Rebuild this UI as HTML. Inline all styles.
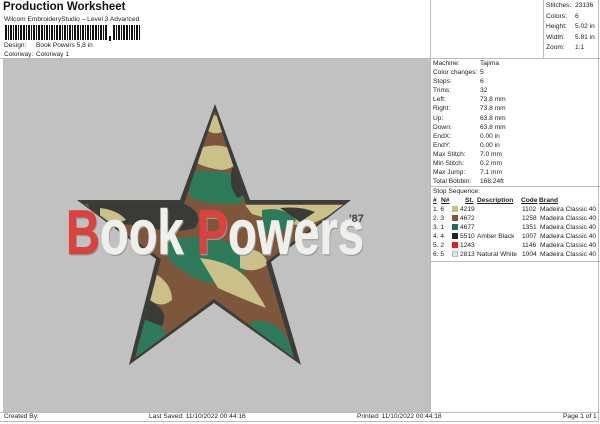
<!DOCTYPE html>
<html><head><meta charset="utf-8"><style>
*{margin:0;padding:0;box-sizing:border-box}
body{width:600px;height:424px;background:#fff;font-family:"Liberation Sans",Arial,sans-serif;color:#222;position:relative;overflow:hidden;font-size:6.6px}
.a{position:absolute;white-space:nowrap}
.t{font-size:6.6px;line-height:9px}
</style></head><body>
<div class="a" style="left:3px;top:1px;font-size:11.5px;font-weight:bold;color:#111">Production Worksheet</div>
<div class="a t" style="left:4px;top:15px">Wilcom EmbroideryStudio – Level 3 Advanced</div>
<svg class="a" style="left:5px;top:25px" width="140" height="16">
<g fill="#111">
<rect x="0" y="0" width="2" height="15"/><rect x="3" y="0" width="1" height="15"/><rect x="5" y="0" width="2" height="15"/><rect x="8" y="0" width="1" height="15"/><rect x="10" y="0" width="2" height="15"/><rect x="13" y="0" width="1" height="15"/><rect x="15" y="0" width="2" height="15"/><rect x="18" y="0" width="2" height="15"/><rect x="21" y="0" width="1" height="15"/><rect x="23" y="0" width="2" height="15"/><rect x="26" y="0" width="1" height="15"/><rect x="28" y="0" width="2" height="15"/><rect x="31" y="0" width="1" height="15"/><rect x="33" y="0" width="2" height="15"/><rect x="36" y="0" width="2" height="15"/><rect x="39" y="0" width="1" height="15"/><rect x="41" y="0" width="2" height="15"/><rect x="44" y="0" width="1" height="15"/><rect x="46" y="0" width="2" height="15"/><rect x="49" y="0" width="1" height="15"/><rect x="51" y="0" width="2" height="15"/><rect x="54" y="0" width="2" height="15"/><rect x="57" y="0" width="1" height="15"/><rect x="59" y="0" width="2" height="15"/><rect x="62" y="0" width="1" height="15"/><rect x="64" y="0" width="2" height="15"/><rect x="67" y="0" width="1" height="15"/><rect x="69" y="0" width="2" height="15"/><rect x="72" y="0" width="2" height="15"/><rect x="75" y="0" width="1" height="15"/><rect x="77" y="0" width="2" height="15"/><rect x="80" y="0" width="1" height="15"/><rect x="82" y="0" width="2" height="15"/><rect x="85" y="0" width="1" height="15"/><rect x="87" y="0" width="2" height="15"/><rect x="90" y="0" width="2" height="15"/><rect x="93" y="0" width="1" height="15"/><rect x="95" y="0" width="2" height="15"/><rect x="98" y="0" width="1" height="15"/><rect x="100" y="0" width="2" height="15"/>
<rect x="104" y="11" width="2" height="5"/>
<rect x="108" y="0" width="2" height="15"/><rect x="111" y="0" width="1" height="15"/><rect x="113" y="0" width="2" height="15"/><rect x="116" y="0" width="1" height="15"/><rect x="118" y="0" width="2" height="15"/><rect x="121" y="0" width="2" height="15"/><rect x="124" y="0" width="1" height="15"/><rect x="126" y="0" width="2" height="15"/><rect x="129" y="0" width="1" height="15"/><rect x="131" y="0" width="2" height="15"/><rect x="134" y="0" width="1" height="15"/>
</g></svg>
<div class="a t" style="left:4px;top:41px">Design:</div><div class="a t" style="left:36px;top:41px">Book Powers 5,8 in</div>
<div class="a t" style="left:4px;top:50px">Colorway:</div><div class="a t" style="left:36px;top:50px">Colorway 1</div>
<div class="a" style="left:0;top:58px;width:430px;height:1px;background:#bbb"></div>
<div class="a" style="left:543px;top:0;width:1px;height:58px;background:#bbb"></div>
<div class="a" style="left:430px;top:0;width:1px;height:412px;background:#bbb"></div>
<div class="a" style="left:430px;top:58px;width:170px;height:1px;background:#bbb"></div>
<div class="a" style="left:598px;top:0;width:1px;height:422px;background:#bbb"></div>
<div class="a t" style="left:546px;top:1px;line-height:10.5px">Stitches:<br>Colors:<br>Height:<br>Width:<br>Zoom:</div>
<div class="a t" style="left:575px;top:1px;line-height:10.5px">23136<br>6<br>5.02 in<br>5.81 in<br>1:1</div>
<div class="a t" style="left:433px;top:59px;line-height:9.1px">Machine:<br>Color changes:<br>Stops:<br>Trims:<br>Left:<br>Right:<br>Up:<br>Down:<br>EndX:<br>EndY:<br>Max Stitch:<br>Min Stitch:<br>Max Jump:<br>Total Bobbin:</div>
<div class="a t" style="left:480px;top:59px;line-height:9.1px">Tajima<br>5<br>6<br>32<br>73.8 mm<br>73.8 mm<br>63.8 mm<br>63.8 mm<br>0.00 in<br>0.00 in<br>7.0 mm<br>0.2 mm<br>7.1 mm<br>168.24ft</div>
<div class="a" style="left:430px;top:186px;width:170px;height:1px;background:#bbb"></div>
<div class="a t" style="left:433px;top:187px">Stop Sequence:</div>
<div class="a t" style="left:433px;top:196px;font-weight:bold;text-decoration:underline">#</div>
<div class="a t" style="left:441px;top:196px;font-weight:bold;text-decoration:underline">N#</div>
<div class="a t" style="left:465px;top:196px;font-weight:bold;text-decoration:underline">St.</div>
<div class="a t" style="left:477px;top:196px;font-weight:bold;text-decoration:underline">Description</div>
<div class="a t" style="left:521px;top:196px;font-weight:bold;text-decoration:underline">Code</div>
<div class="a t" style="left:539px;top:196px;font-weight:bold;text-decoration:underline">Brand</div>
<div class="a t" style="left:433px;top:205px;line-height:9.1px">1. 6<br>2. 3<br>3. 1<br>4. 4<br>5. 2<br>6. 5</div>
<div class="a" style="left:452px;top:206px;width:6px;height:6px;background:#c8bf8a"></div>
<div class="a" style="left:452px;top:215px;width:6px;height:6px;background:#8a5038"></div>
<div class="a" style="left:452px;top:224px;width:6px;height:6px;background:#1f6e50"></div>
<div class="a" style="left:452px;top:233px;width:6px;height:6px;background:#222"></div>
<div class="a" style="left:452px;top:242px;width:6px;height:6px;background:#e02020"></div>
<div class="a" style="left:452px;top:251px;width:6px;height:6px;background:#e4e4e8;border:1px solid #bbb"></div>
<div class="a t" style="left:460px;top:205px;line-height:9.1px">4219<br>4672<br>4677<br>5510<br>1243<br>2813</div>
<div class="a t" style="left:477px;top:205px;line-height:9.1px"><br><br><br>Amber Black<br><br>Natural White</div>
<div class="a t" style="left:522px;top:205px;line-height:9.1px">1102<br>1258<br>1351<br>1007<br>1146<br>1004</div>
<div class="a t" style="left:540px;top:205px;line-height:9.1px">Madeira Classic 40<br>Madeira Classic 40<br>Madeira Classic 40<br>Madeira Classic 40<br>Madeira Classic 40<br>Madeira Classic 40</div>
<div class="a" style="left:430px;top:261px;width:170px;height:1px;background:#bbb"></div>
<div class="a" style="left:3px;top:59px;width:427px;height:353px;background:#c1c1c1"></div>
<svg class="a" style="left:0;top:0" width="430" height="412">
<defs><clipPath id="st"><polygon points="215,111 246,204 344,204 266,262 294,358 214,299 135,358 161,259 84,204 184,204"/></clipPath></defs>
<polygon points="215,104 250,200 351,200 271,262 301,365 214,303 129,365 156,259 77,200 180,200" fill="#3c3c38"/>
<g clip-path="url(#st)">
<rect x="70" y="100" width="290" height="270" fill="#7e563c"/>
<path d="M205,118 Q215,112 226,120 L222,132 Q212,136 205,128Z" fill="#c9c08a"/>
<path d="M195,150 Q218,140 238,152 Q240,168 222,170 Q205,168 195,162Z" fill="#c9c08a"/>
<path d="M190,172 Q215,168 240,176 Q250,192 240,204 Q210,205 190,198Z" fill="#2f7a5a"/>
<path d="M232,168 Q248,168 252,190 L238,198 Q228,188 232,168Z" fill="#3a3a36"/>
<path d="M88,204 L185,204 Q205,214 195,228 Q165,236 145,224 Q118,228 92,214Z" fill="#3a3a36"/>
<path d="M100,208 Q118,210 126,220 Q112,226 100,220Z" fill="#c9c08a"/>
<path d="M245,205 L345,205 Q322,222 302,226 Q272,220 252,214Z" fill="#c9c08a"/>
<path d="M262,210 Q284,206 296,220 Q286,236 262,232Z" fill="#2f7a5a"/>
<path d="M280,208 Q300,206 315,212 L300,222Z" fill="#3a3a36"/>
<path d="M165,242 Q200,230 238,246 Q258,268 232,282 Q205,288 182,270 Q168,262 165,250Z" fill="#2f7a5a"/>
<path d="M200,258 Q235,262 250,282 Q262,300 266,308 Q240,298 218,288Z" fill="#c9c08a"/>
<path d="M240,250 Q262,246 268,264 Q255,274 240,268Z" fill="#c9c08a"/>
<path d="M152,272 Q172,282 172,300 Q160,310 148,298Z" fill="#c9c08a"/>
<path d="M140,318 Q165,322 170,342 L140,358 L134,350Z" fill="#2f7a5a"/>
<path d="M250,322 Q274,316 288,340 L294,358 Q270,350 254,340Z" fill="#2f7a5a"/>
<path d="M148,300 Q170,310 162,326 L140,318Z" fill="#3a3a36"/>
</g>
<g font-family="Liberation Sans" font-weight="bold" font-size="63">
<text x="67" y="255.5" fill="#999997" textLength="298" lengthAdjust="spacingAndGlyphs">Book Powers</text>
<text x="66" y="254" stroke-width="0.6" textLength="298" lengthAdjust="spacingAndGlyphs"><tspan fill="#d8433f" stroke="#d8433f">B</tspan><tspan fill="#efefec" stroke="#efefec">ook </tspan><tspan fill="#d8433f" stroke="#d8433f">P</tspan><tspan fill="#efefec" stroke="#efefec">owers</tspan></text>
</g>
<text x="349" y="222" font-family="Liberation Sans" font-weight="bold" font-size="11" fill="#444">'87</text>
</svg>
<div class="a" style="left:0;top:412px;width:599px;height:1px;background:#bbb"></div>
<div class="a" style="left:0;top:421px;width:599px;height:1px;background:#bbb"></div>
<div class="a t" style="left:4px;top:412px">Created By:</div>
<div class="a t" style="left:149px;top:412px">Last Saved: 11/10/2022 00:44:16</div>
<div class="a t" style="left:357px;top:412px">Printed: 11/10/2022 00:44:18</div>
<div class="a t" style="left:563px;top:412px">Page 1 of 1</div>
</body></html>
